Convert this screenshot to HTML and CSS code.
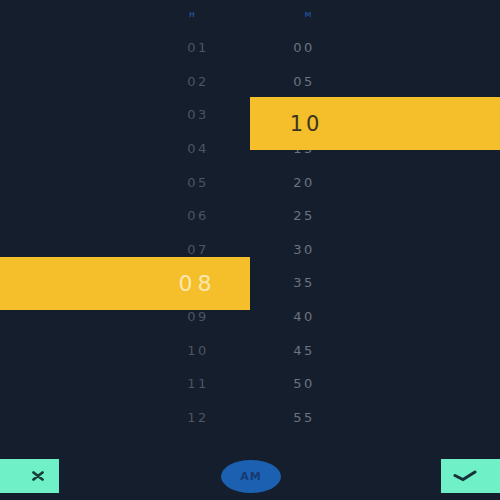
FILE: index.html
```html
<!DOCTYPE html>
<html>
<head>
<meta charset="utf-8">
<link rel="stylesheet" href="styles.css">
</head>
<body>
<div class="picker">
  <div class="head">
    <span class="head-cell">H</span>
    <span class="head-sep">:</span>
    <span class="head-cell">M</span>
  </div>
  <div class="cols">
    <div class="col hours">
      <div class="row">01</div><div class="row">02</div><div class="row">03</div><div class="row">04</div>
      <div class="row">05</div><div class="row">06</div><div class="row">07</div><div class="row is-picked">08</div>
      <div class="row">09</div><div class="row">10</div><div class="row">11</div><div class="row">12</div>
    </div>
    <div class="col mins">
      <div class="row">00</div><div class="row">05</div><div class="row is-picked">10</div><div class="row">15</div>
      <div class="row">20</div><div class="row">25</div><div class="row">30</div><div class="row">35</div>
      <div class="row">40</div><div class="row">45</div><div class="row">50</div><div class="row">55</div>
    </div>
  </div>
  <div class="bar bar-hour"><span class="bar-text">08</span></div>
  <div class="bar bar-min"><span class="bar-text">10</span></div>
  <div class="foot">
    <div class="btn btn-cancel">
      <svg width="12" height="10" viewBox="0 0 12 10"><path d="M1.5 1.5 L10.5 8.5 M10.5 1.5 L1.5 8.5" stroke="#17403b" stroke-width="2.8" stroke-linecap="round"/></svg>
    </div>
    <div class="ampm">AM</div>
    <div class="btn btn-ok">
      <svg width="24" height="12" viewBox="0 0 24 12"><path d="M2 5.5 L10 9.5 L22 2" fill="none" stroke="#17303a" stroke-width="3" stroke-linecap="round" stroke-linejoin="miter"/></svg>
    </div>
  </div>
</div>
</body>
</html>
```
FILE: styles.css
```css
html, body {
  margin: 0;
  padding: 0;
  background: #151e2d;
}
body {
  width: 500px;
  height: 500px;
  overflow: hidden;
  font-family: "DejaVu Sans", sans-serif;
}
.picker {
  position: relative;
  width: 500px;
  height: 500px;
  display: flex;
  flex-direction: column;
}
.head {
  height: 31px;
  display: flex;
  justify-content: center;
  align-items: center;
  padding-bottom: 1px;
  box-sizing: border-box;
}
.head-cell {
  width: 96px;
  text-align: center;
  font-size: 7px;
  font-weight: bold;
  color: #1f4c8c;
}
.head-sep {
  width: 20px;
  text-align: center;
  font-size: 7px;
  color: #2a3345;
}
.cols {
  display: flex;
  justify-content: center;
}
.col {
  width: 106px;
  display: flex;
  flex-direction: column;
}
.row {
  height: 33.6px;
  display: flex;
  align-items: center;
  justify-content: center;
  font-size: 13px;
  letter-spacing: 2.5px;
  padding-left: 2px;
}
.row.is-picked { visibility: hidden; }
.hours .row { color: #4c5462; }
.mins .row { color: #6d737e; }
.bar {
  position: absolute;
  background: #f4bf2a;
  height: 53px;
  display: flex;
  align-items: center;
}
.bar-hour {
  left: 0;
  width: 250px;
  top: 257px;
  justify-content: flex-end;
}
.bar-min {
  left: 250px;
  width: 250px;
  top: 97px;
}
.bar-text {
  width: 106px;
  text-align: center;
  font-size: 21px;
  letter-spacing: 3px;
  padding-left: 3px;
  box-sizing: border-box;
}
.bar-hour .bar-text { color: #fbe8b0; margin-right: 2px; font-size: 22px; letter-spacing: 5px; padding-left: 5px; }
.bar-min .bar-text { color: #3b3522; padding-left: 6px; }
.foot {
  margin-top: 25px;
  height: 34px;
  display: flex;
  justify-content: space-between;
  align-items: center;
}
.btn {
  width: 59px;
  height: 34px;
  background: #6ff0c6;
  display: flex;
  align-items: center;
}
.btn-cancel {
  justify-content: flex-end;
  padding-right: 15px;
  box-sizing: border-box;
}
.btn-ok {
  padding-left: 12px;
  box-sizing: border-box;
}
.ampm {
  width: 60px;
  height: 33px;
  border-radius: 50%;
  background: #1c60b1;
  color: #163a73;
  font-size: 11px;
  font-weight: bold;
  letter-spacing: 1px;
  display: flex;
  align-items: center;
  justify-content: center;
  margin-left: 2px;
}
```
